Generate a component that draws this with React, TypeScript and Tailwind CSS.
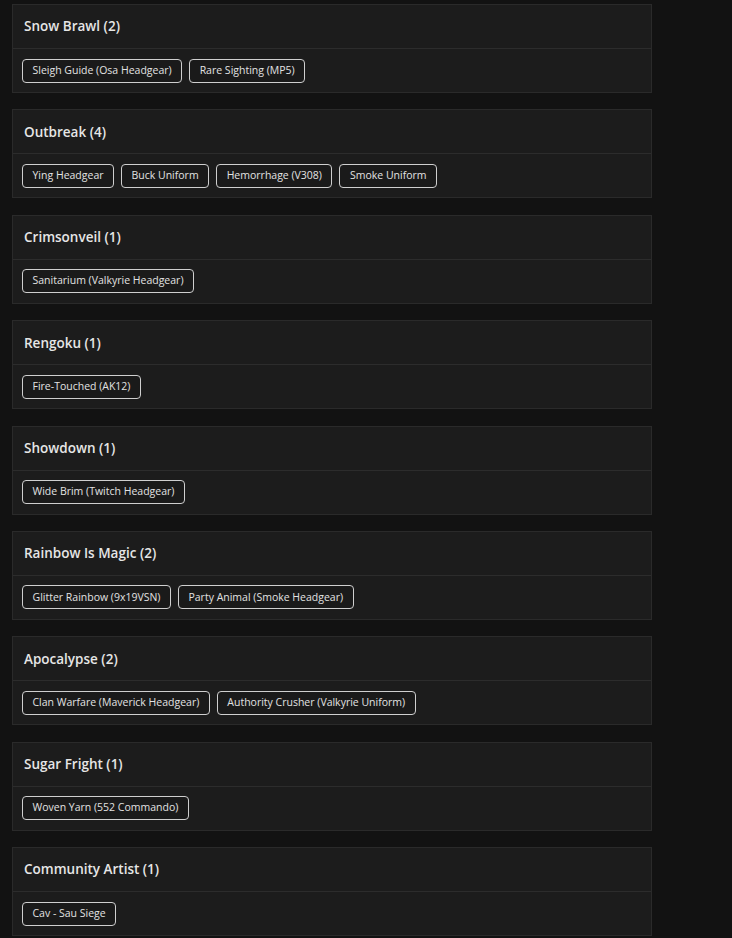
const sections: { title: string; items: string[] }[] = [
  { title: 'Snow Brawl', items: ['Sleigh Guide (Osa Headgear)', 'Rare Sighting (MP5)'] },
  { title: 'Outbreak', items: ['Ying Headgear', 'Buck Uniform', 'Hemorrhage (V308)', 'Smoke Uniform'] },
  { title: 'Crimsonveil', items: ['Sanitarium (Valkyrie Headgear)'] },
  { title: 'Rengoku', items: ['Fire-Touched (AK12)'] },
  { title: 'Showdown', items: ['Wide Brim (Twitch Headgear)'] },
  { title: 'Rainbow Is Magic', items: ['Glitter Rainbow (9x19VSN)', 'Party Animal (Smoke Headgear)'] },
  { title: 'Apocalypse', items: ['Clan Warfare (Maverick Headgear)', 'Authority Crusher (Valkyrie Uniform)'] },
  { title: 'Sugar Fright', items: ['Woven Yarn (552 Commando)'] },
  { title: 'Community Artist', items: ['Cav - Sau Siege'] },
];

export default function App() {
  return (
    <div
      className="min-h-screen bg-[#121212] pt-[4px] pl-[12px]"
      style={{ fontFamily: '"Open Sans", "Noto Sans", sans-serif' }}
    >
      <div className="w-[640px] flex flex-col gap-[16.375px]">
        {sections.map((s) => (
          <div key={s.title} className="bg-[#1c1c1c] border border-[#2a2a2a]">
            <div className="h-[44px] flex items-center px-[11px] border-b border-[#2c2c2c]">
              <h3 className="text-[13.5px] font-semibold text-[#e6e6e6]">
                {s.title} ({s.items.length})
              </h3>
            </div>
            <div className="h-[43px] flex items-center gap-[7px] px-[9px]">
              {s.items.map((it) => (
                <span
                  key={it}
                  className="h-[24px] flex items-center px-[9.5px] rounded-[4px] border border-[#cfcfcf] text-[10.5px] text-[#e2e2e2] bg-[#1a1a1a]"
                >
                  {it}
                </span>
              ))}
            </div>
          </div>
        ))}
      </div>
    </div>
  );
}
